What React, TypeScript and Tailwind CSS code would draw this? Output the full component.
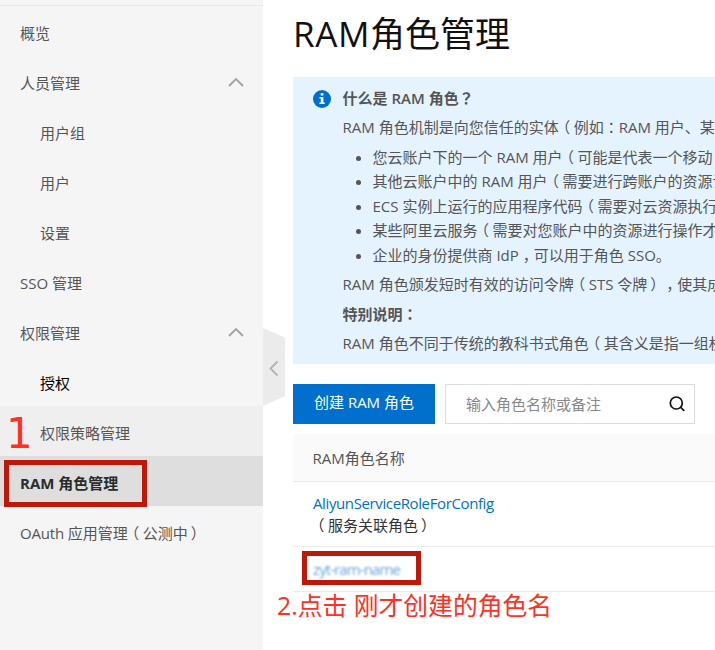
import type { ReactNode } from "react";

function Mark({ children }: { children: ReactNode }) {
  return <span className="font-['Noto_Sans_CJK_TC']">{children}</span>;
}

function OpenParen() {
  return <span className="relative -left-[3.500px]">（</span>;
}

function Paren({ children }: { children: ReactNode }) {
  return (
    <>
      <OpenParen />
      {children}
      <span className="relative left-[3px]">）</span>
    </>
  );
}

function Comma() {
  return <span className="relative left-[4px]">，</span>;
}

function ChevronUp() {
  return (
    <svg className="relative top-px left-px h-[10px] w-[16px]" viewBox="0 0 16 10" fill="none" stroke="#a3a3a3" strokeWidth="1.9">
      <path d="M1 9 8 2l7 7" />
    </svg>
  );
}

function NavItem({
  children,
  className = "pl-5 text-[#555]",
  open = false,
}: {
  children: ReactNode;
  className?: string;
  open?: boolean;
}) {
  return (
    <div className={`flex h-[50px] items-center justify-between pr-5 ${className}`}>
      <span className="relative top-[2px]">{children}</span>
      {open && <ChevronUp />}
    </div>
  );
}

function Sidebar() {
  return (
    <nav className="relative h-[650px] w-[263px] shrink-0 bg-[#f5f5f5]">
      <div className="h-[6px] border-b border-[#e8e8e8]" />
      <NavItem>概览</NavItem>
      <NavItem open>人员管理</NavItem>
      <NavItem className="pl-10 text-[#555]">用户组</NavItem>
      <NavItem className="pl-10 text-[#555]">用户</NavItem>
      <NavItem className="pl-10 text-[#555]">设置</NavItem>
      <NavItem>SSO 管理</NavItem>
      <NavItem open>权限管理</NavItem>
      <NavItem className="pl-10 text-black">授权</NavItem>
      <NavItem className="bg-[#efefef] pl-10 text-[#555]">权限策略管理</NavItem>
      <NavItem className="bg-[#dedede] pl-5 font-bold text-[#2b2b2b]">RAM 角色管理</NavItem>
      <NavItem>
        <span className="tracking-[-0.2px]">OAuth</span> 应用管理<Paren>公测中</Paren>
      </NavItem>
      <svg className="absolute top-[328px] left-[263px] h-[78px] w-[22px]" viewBox="0 0 22 78">
        <path d="M0 0 22 9.500V68L0 78Z" fill="#ebebeb" />
        <path d="m14.500 33.500-7 7 7 7" fill="none" stroke="#b3b3b3" strokeWidth="1.800" />
      </svg>
      <span className="absolute top-[410px] left-[6px] font-['DejaVu_Sans'] text-[42px] leading-[48px] text-[#ff3024]">1</span>
      <div className="absolute top-[460px] left-[4px] h-[47px] w-[143px] border-5 border-[#be180b]" />
    </nav>
  );
}

function InfoPanel() {
  return (
    <section className="flex h-[287px] bg-[#e4f3fe] pt-[9px] pl-5 text-[#555]">
      <svg className="mt-1 mr-[11.500px] size-[18px] shrink-0" viewBox="0 0 18 18">
        <circle cx="9" cy="9" r="9" fill="#0070cc" />
        <path d="M7.700 3.200h2.700v2.400H7.700ZM6.500 7h3.900v5.500h1.300V14H6.500v-1.500h1.300v-4H6.500Z" fill="#fff" />
      </svg>
      <div className="flex flex-col leading-6 whitespace-nowrap">
        <p className="font-bold">什么是 <span className="font-semibold">RAM</span> 角色<Mark>？</Mark></p>
        <p className="mt-[5px]">RAM 角色机制是向您信任的实体<OpenParen />例如<Mark>：</Mark>RAM 用户、某</p>
        <ul className="mt-[5.600px] list-disc pl-[30px] leading-[24.500px]">
          <li>您云账户下的一个 RAM 用户<OpenParen />可能是代表一个移动</li>
          <li>其他云账户中的 RAM 用户<OpenParen />需要进行跨账户的资源访</li>
          <li>ECS 实例上运行的应用程序代码<OpenParen />需要对云资源执行</li>
          <li>某些阿里云服务<OpenParen />需要对您账户中的资源进行操作才</li>
          <li>企业的身份提供商 IdP<Comma />可以用于角色 SSO。</li>
        </ul>
        <p className="mt-[4.900px]">RAM 角色颁发短时有效的访问令牌<Paren>STS 令牌</Paren><Comma />使其成</p>
        <p className="mt-[6px] font-bold">特别说明<Mark>：</Mark></p>
        <p className="mt-[5px]">RAM 角色不同于传统的教科书式角色<OpenParen />其含义是指一组权</p>
      </div>
    </section>
  );
}

function Toolbar() {
  return (
    <div className="mt-5 flex gap-[10px]">
      <button className="h-10 w-[142px] bg-[#0070cc] pb-[4px] text-white">创建 RAM 角色</button>
      <div className="flex h-10 w-[250px] items-center justify-between border border-[#dedede] pr-[9px] pl-5 text-[#888]">
        <span>输入角色名称或备注</span>
        <svg className="size-4" viewBox="0 0 16 16" fill="none" stroke="#111" strokeWidth="1.700">
          <circle cx="7.300" cy="7" r="6" />
          <path d="m11.500 11.200 3.800 3.800" />
        </svg>
      </div>
    </div>
  );
}

function RoleTable() {
  return (
    <div className="mt-[10px]">
      <div className="flex h-12 items-center border-b border-[#e8e8e8] bg-[#fafafa] pl-[19.500px] text-[#555]">
        <span>RAM角色名称</span>
      </div>
      <div className="h-[65px] border-b border-[#ebebeb] pt-[10px] pl-5 leading-[22px]">
        <div className="tracking-[-0.380px] text-[#0070cc]">AliyunServiceRoleForConfig</div>
        <div className="text-[#333]"><Paren>服务关联角色</Paren></div>
      </div>
      <div className="relative h-[45px] border-b border-[#ebebeb] pt-[11px] pl-5 leading-[22px]">
        <span className="tracking-[-0.900px] text-[#4590d4] opacity-80 blur-[1px]">zyt-ram-name</span>
        <div className="absolute top-[4px] left-[9px] h-[34px] w-[119px] border-5 border-[#be180b]" />
      </div>
    </div>
  );
}

export default function App() {
  return (
    <div className="relative flex h-[650px] w-[715px] overflow-hidden bg-white font-['Open_Sans','Noto_Sans_CJK_SC',sans-serif] text-[15px] leading-[22px] [text-spacing-trim:space-all]">
      <Sidebar />
      <main className="ml-[30px] min-w-0 flex-1 overflow-hidden">
        <h1 className="h-[77px] pt-[9px] text-[35px] leading-[50px] text-[#111]">
          <span className="tracking-[0.600px]">RAM</span>角色管理
        </h1>
        <InfoPanel />
        <Toolbar />
        <RoleTable />
      </main>
      <div className="absolute top-[586px] left-[277px] text-[24.800px] leading-[38px] whitespace-nowrap text-[#ff3024]">
        2.点击 刚才创建的角色名
      </div>
    </div>
  );
}
